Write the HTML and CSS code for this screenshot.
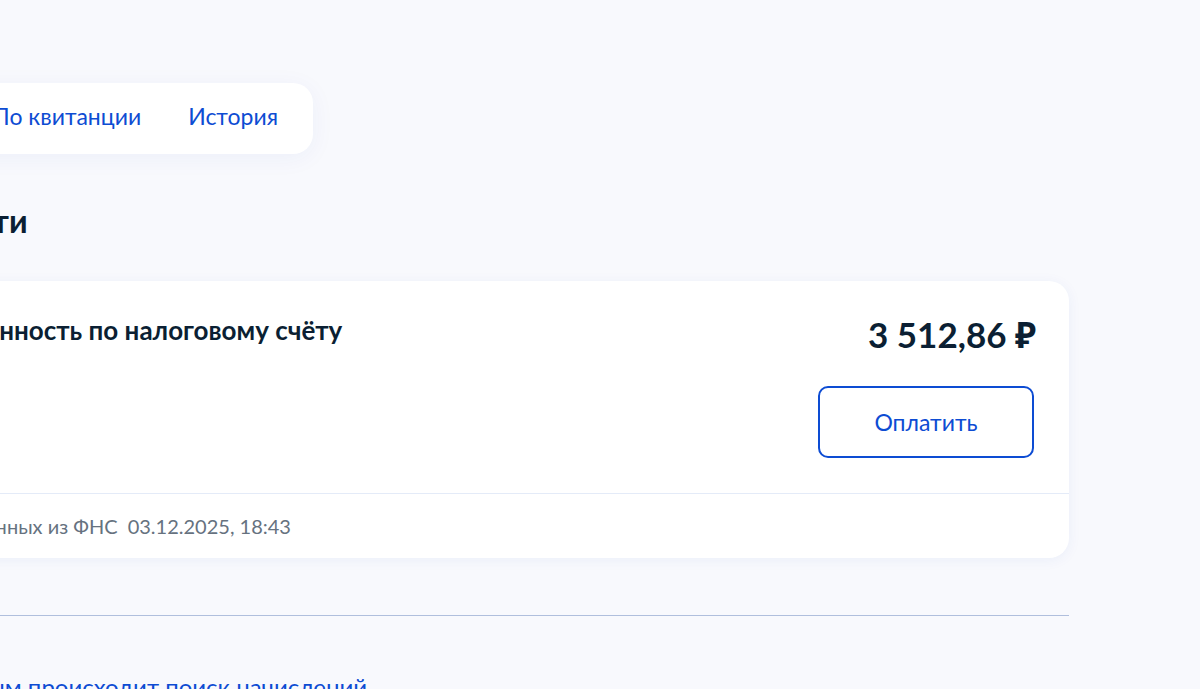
FILE: index.html
```html
<!doctype html>
<html lang="ru">
<head>
    <meta charset="UTF-8">
    <meta name="viewport" content="width=device-width, initial-scale=1.0">
    <title>Налоги</title>
    <link rel="stylesheet" href="styles.css">
</head>
<body>
<div class="page">

    <!-- Tabs -->
    <nav class="tabs">
        <a class="tab" href="#">Начисления</a>
        <a class="tab" href="#">По квитанции</a>
        <a class="tab" href="#">История</a>
    </nav>

    <h1 class="title">Задолженности</h1>

    <!-- Debt card -->
    <div class="card">
        <div class="card-body">
            <div class="card-name">Ваша задолженность по налоговому счёту</div>
            <div class="card-pay">
                <div class="amount">3&nbsp;512,86&nbsp;₽</div>
                <button class="btn-pay">Оплатить</button>
            </div>
        </div>
        <div class="card-footer">
            Дата получения данных из ФНС <span class="date">03.12.2025, 18:43</span>
        </div>
    </div>

    <hr class="divider">

    <a class="link" href="#">По каким данным происходит поиск начислений</a>
</div>
</body>
</html>
```

FILE: styles.css
```css
body {
    margin: 0;
    background-color: #f8f9fd;
    font-family: Lato, "Noto Sans", sans-serif;
    color: #0b1f33;
    overflow: hidden;
}

.page {
    width: 1281px;
    margin-left: -212px;
    padding-top: 83px;
}

/* Tabs */
.tabs {
    display: inline-flex;
    gap: 47px;
    height: 71px;
    box-sizing: border-box;
    align-items: center;
    padding: 0 35px 6px 30px;
    background-color: #fff;
    border-radius: 20px;
    box-shadow: 0 4px 24px rgba(0, 60, 180, 0.05);
}

.tab {
    font-size: 23px;
    color: #0d4cd3;
    text-decoration: none;
}

.title {
    margin: 47px 0 40px;
    font-size: 32px;
    line-height: 40px;
    font-weight: 700;
}

/* Card */
.card {
    background-color: #fff;
    border-radius: 20px;
    box-shadow: 0 2px 14px rgba(0, 60, 180, 0.06);
}

.card-body {
    display: flex;
    justify-content: space-between;
    padding: 33px 35px 35px 34px;
}

.card-name {
    font-size: 26px;
    line-height: 32px;
    font-weight: 700;
}

.card-pay {
    display: flex;
    flex-direction: column;
    align-items: flex-end;
    gap: 32px;
}

.amount {
    margin-right: -2px;
    font-size: 35px;
    line-height: 40px;
    font-weight: 700;
}

.btn-pay {
    width: 216px;
    height: 72px;
    border: 2px solid #0d4cd3;
    border-radius: 10px;
    background: #fff;
    color: #0d4cd3;
    font-family: inherit;
    font-size: 23px;
    cursor: pointer;
}

.card-footer {
    padding: 20px 32px;
    line-height: 24px;
    border-top: 1px solid #e4ebf8;
    font-size: 20px;
    color: #66727f;
}

.date {
    margin-left: 5px;
}

.divider {
    margin: 57px 0 0;
    border: 0;
    border-top: 1px solid #b0bfdd;
}

.link {
    display: block;
    margin-top: 55px;
    padding-left: 35px;
    font-size: 24px;
    line-height: 32px;
    color: #0d4cd3;
    text-decoration: none;
}
```
